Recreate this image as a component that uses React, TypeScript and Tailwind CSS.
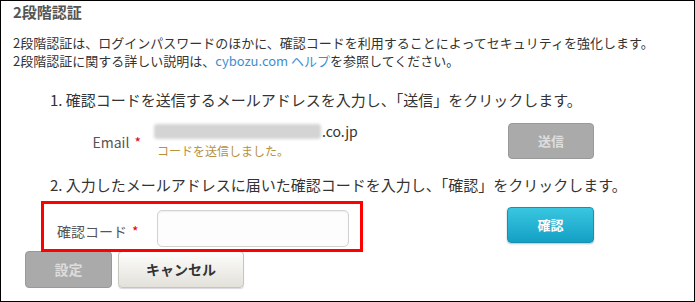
import React from "react";

function RequiredMark() {
  return <span className="ml-[5px] text-[#e60012]">*</span>;
}

export default function App() {
  return (
    <div
      className="flex h-[302px] w-[695px] flex-col overflow-hidden border border-black bg-white text-[#333]"
      style={{ fontFamily: '"Noto Sans CJK JP", "Noto Sans", sans-serif' }}
    >
      <h1 className="pl-[12px] pt-[2px] text-[15px] font-bold leading-[18px] text-[#555]">
        2段階認証
      </h1>

      <div className="mt-[13px] pl-[12px] text-[13px] leading-[18px]">
        <p>
          2段階認証は、ログインパスワードのほかに、確認コードを利用することによってセキュリティを強化します。
        </p>
        <p>
          2段階認証に関する詳しい説明は、
          <a className="text-[#3d8fce]">cybozu.com ヘルプ</a>
          を参照してください。
        </p>
      </div>

      <p className="mt-[20px] pl-[49px] text-[15px] leading-[20px]">
        1. 確認コードを送信するメールアドレスを入力し、「送信」をクリックします。
      </p>

      {/* email row */}
      <div className="mt-[10px] flex items-start">
        <div className="mt-[12px] w-[153px] pr-[13px] text-right text-[14px] leading-[20px] text-[#555]">
          Email
          <RequiredMark />
        </div>
        <div className="w-[354px]">
          <div className="flex items-center text-[14px] leading-[22px]">
            <span className="inline-block h-[15px] w-[167px] rounded-[3px] bg-[#d4d4d4] blur-[1.5px]" />
            <span className="ml-[1px]">.co.jp</span>
          </div>
          <div className="pl-[3px] text-[12px] leading-[18px] text-[#b8913f]">
            コードを送信しました。
          </div>
        </div>
        <button className="mt-[3px] h-[36px] w-[86px] rounded-[4px] border border-[#999] bg-[#aaaaaa] text-[13px] font-bold text-[#dedede]">
          送信
        </button>
      </div>

      <p className="mt-[15px] pl-[49px] text-[15px] leading-[20px]">
        2. 入力したメールアドレスに届いた確認コードを入力し、「確認」をクリックします。
      </p>

      {/* code row */}
      <div className="mt-[6px] flex items-start">
        <div className="relative z-10 ml-[40px] flex h-[51px] w-[322px] items-start border-[3px] border-[#ff0000] bg-white">
          <div className="mt-[17px] w-[110px] pl-[13px] text-[14px] leading-[20px] text-[#555]">
            確認コード
            <RequiredMark />
          </div>
          <input
            className="ml-[3px] mt-[6px] h-[37px] w-[192px] rounded-[5px] border border-[#d2d2d2] bg-[#fdfdfd] shadow-[inset_0_1px_2px_rgba(0,0,0,0.06)] outline-none"
            type="text"
          />
        </div>
        <button className="ml-[144px] mt-[6px] h-[36px] w-[87px] rounded-[4px] border border-[#1b8fae] bg-gradient-to-b from-[#38c6e0] to-[#12a0c5] text-[13px] font-bold text-white shadow-[0_1px_2px_rgba(0,0,0,0.25)]">
          確認
        </button>
      </div>

      <div className="-mt-[1px] flex gap-[6px] pl-[24px]">
        <button className="h-[37px] w-[87px] rounded-[4px] border border-[#999] bg-[#aaaaaa] text-[14px] font-bold text-[#dcdcdc]">
          設定
        </button>
        <button className="h-[37px] w-[126px] rounded-[4px] border border-[#c7c5bf] bg-gradient-to-b from-[#fdfdfc] to-[#e3e1da] text-[14px] font-bold text-[#333] shadow-[0_1px_1px_rgba(0,0,0,0.15)]">
          キャンセル
        </button>
      </div>
    </div>
  );
}
